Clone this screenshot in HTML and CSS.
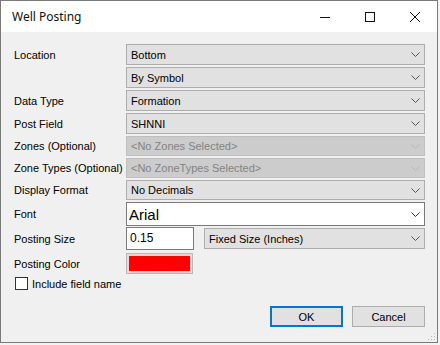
FILE: index.html
```html
<!DOCTYPE html>
<html lang="en">
<head>
    <meta charset="UTF-8">
    <title>Well Posting</title>
    <link rel="stylesheet" href="styles.css">
</head>
<body>

<div class="window">
    <div class="titlebar">
        <span class="title">Well Posting</span>
        <div class="caption-buttons">
            <span class="cap-btn"><svg width="12" height="12" viewBox="0 0 12 12"><line x1="1" y1="6.5" x2="11" y2="6.5" stroke="#111" stroke-width="1"/></svg></span>
            <span class="cap-btn"><svg width="12" height="12" viewBox="0 0 12 12"><rect x="1.5" y="1.5" width="9" height="9" fill="none" stroke="#111" stroke-width="1"/></svg></span>
            <span class="cap-btn"><svg width="12" height="12" viewBox="0 0 12 12"><path d="M1 1 L11 11 M11 1 L1 11" stroke="#111" stroke-width="1"/></svg></span>
        </div>
    </div>

    <div class="content">
        <div class="row">
            <label class="label">Location</label>
            <div class="combo"><span>Bottom</span><svg class="chev" width="9" height="5" viewBox="0 0 9 5"><polyline points="0.5,0.5 4.5,4.5 8.5,0.5" fill="none" stroke="#555" stroke-width="1"/></svg></div>
        </div>
        <div class="row">
            <label class="label"></label>
            <div class="combo"><span>By Symbol</span><svg class="chev" width="9" height="5" viewBox="0 0 9 5"><polyline points="0.5,0.5 4.5,4.5 8.5,0.5" fill="none" stroke="#555" stroke-width="1"/></svg></div>
        </div>
        <div class="row">
            <label class="label">Data Type</label>
            <div class="combo"><span>Formation</span><svg class="chev" width="9" height="5" viewBox="0 0 9 5"><polyline points="0.5,0.5 4.5,4.5 8.5,0.5" fill="none" stroke="#555" stroke-width="1"/></svg></div>
        </div>
        <div class="row">
            <label class="label">Post Field</label>
            <div class="combo"><span>SHNNI</span><svg class="chev" width="9" height="5" viewBox="0 0 9 5"><polyline points="0.5,0.5 4.5,4.5 8.5,0.5" fill="none" stroke="#555" stroke-width="1"/></svg></div>
        </div>
        <div class="row row-short">
            <label class="label">Zones (Optional)</label>
            <div class="combo disabled"><span>&lt;No Zones Selected&gt;</span><svg class="chev" width="9" height="5" viewBox="0 0 9 5"><polyline points="0.5,0.5 4.5,4.5 8.5,0.5" fill="none" stroke="#b8b8b8" stroke-width="1"/></svg></div>
        </div>
        <div class="row row-short">
            <label class="label">Zone Types (Optional)</label>
            <div class="combo disabled"><span>&lt;No ZoneTypes Selected&gt;</span><svg class="chev" width="9" height="5" viewBox="0 0 9 5"><polyline points="0.5,0.5 4.5,4.5 8.5,0.5" fill="none" stroke="#b8b8b8" stroke-width="1"/></svg></div>
        </div>
        <div class="row row-short">
            <label class="label">Display Format</label>
            <div class="combo"><span>No Decimals</span><svg class="chev" width="9" height="5" viewBox="0 0 9 5"><polyline points="0.5,0.5 4.5,4.5 8.5,0.5" fill="none" stroke="#555" stroke-width="1"/></svg></div>
        </div>
        <div class="row row-font">
            <label class="label">Font</label>
            <div class="combo font-combo"><span>Arial</span><svg class="chev" width="9" height="5" viewBox="0 0 9 5"><polyline points="0.5,0.5 4.5,4.5 8.5,0.5" fill="none" stroke="#333" stroke-width="1"/></svg></div>
        </div>
        <div class="row row-size">
            <label class="label">Posting Size</label>
            <div class="size-group">
                <div class="textbox">0.15</div>
                <div class="combo size-combo"><span>Fixed Size (Inches)</span><svg class="chev" width="9" height="5" viewBox="0 0 9 5"><polyline points="0.5,0.5 4.5,4.5 8.5,0.5" fill="none" stroke="#555" stroke-width="1"/></svg></div>
            </div>
        </div>
        <div class="row">
            <label class="label">Posting Color</label>
            <div class="swatch"><div class="swatch-fill"></div></div>
        </div>
        <div class="check-row">
            <span class="checkbox"></span>
            <span>Include field name</span>
        </div>

        <div class="buttons">
            <button class="btn btn-default">OK</button>
            <button class="btn">Cancel</button>
        </div>
    </div>
    <div class="grip"></div>
</div>

</body>
</html>
```

FILE: styles.css
```css
body {
    margin: 0;
    background-color: #f3f3f3;
    font-family: 'Liberation Sans', Arial, sans-serif;
    font-size: 11px;
    color: #000;
}

.window {
    position: relative;
    width: 438px;
    height: 343px;
    box-sizing: border-box;
    border: 1px solid #7a7a7a;
    background-color: #f0f0f0;
}

.titlebar {
    height: 31px;
    background-color: #fff;
    display: flex;
    align-items: center;
    justify-content: space-between;
}

.title {
    font-family: 'Noto Sans', sans-serif;
    font-size: 12px;
    padding-left: 11px;
    color: #111;
}

.caption-buttons {
    display: flex;
    height: 100%;
}

.cap-btn {
    width: 45px;
    display: flex;
    align-items: center;
    justify-content: center;
}

.content {
    padding: 12px 11px 0 13px;
}

.row {
    display: flex;
    align-items: center;
    height: 21px;
    margin-bottom: 2px;
}

.row-short {
    height: 20px;
}

.row-font {
    height: 24px;
    margin-bottom: 1px;
}

.row-size {
    height: 23px;
    margin-bottom: 3px;
}

.label {
    width: 112px;
    flex-shrink: 0;
    white-space: nowrap;
}

.combo {
    width: 299px;
    height: 100%;
    box-sizing: border-box;
    border: 1px solid #adadad;
    background-color: #e1e1e1;
    display: flex;
    align-items: center;
    justify-content: space-between;
    padding: 0 4px 0 4px;
}

.chev {
    margin-right: 0;
}

.combo.disabled {
    background-color: #cccccc;
    border-color: #bfbfbf;
    color: #838383;
}

.font-combo {
    background-color: #fff;
    border-color: #7a7a7a;
    font-size: 15px;
    padding-left: 2px;
}

.size-group {
    display: flex;
    align-items: center;
    height: 100%;
    width: 299px;
}

.textbox {
    width: 68px;
    height: 23px;
    box-sizing: border-box;
    border: 1px solid #7a7a7a;
    background-color: #fff;
    padding: 3px 0 0 3px;
    font-size: 12px;
}

.size-combo {
    width: 221px;
    height: 21px;
    margin-left: 10px;
}

.swatch {
    width: 67px;
    height: 21px;
    box-sizing: border-box;
    border: 1px solid #b8b8b8;
    background-color: #f9d3d3;
    padding: 2px;
}

.swatch-fill {
    width: 100%;
    height: 100%;
    background-color: #ff0000;
}

.check-row {
    display: flex;
    align-items: center;
    height: 15px;
    margin-top: 1px;
    margin-left: 1px;
}

.checkbox {
    width: 13px;
    height: 13px;
    box-sizing: border-box;
    border: 1px solid #333;
    background-color: #fff;
    margin-right: 4px;
}

.buttons {
    display: flex;
    justify-content: flex-end;
    gap: 9px;
    margin-top: 15px;
    padding-right: 1px;
}

.btn {
    width: 73px;
    height: 21px;
    box-sizing: border-box;
    border: 1px solid #adadad;
    background-color: #e1e1e1;
    font-family: 'Liberation Sans', Arial, sans-serif;
    font-size: 11px;
    padding: 0;
}

.btn-default {
    border: 2px solid #0078d7;
}

.grip {
    position: absolute;
    right: 2px;
    bottom: 2px;
    width: 8px;
    height: 8px;
    background-image: radial-gradient(circle, #b5b5b5 0.8px, transparent 1px);
    background-size: 3px 3px;
    clip-path: polygon(100% 0, 100% 100%, 0 100%);
}
```
